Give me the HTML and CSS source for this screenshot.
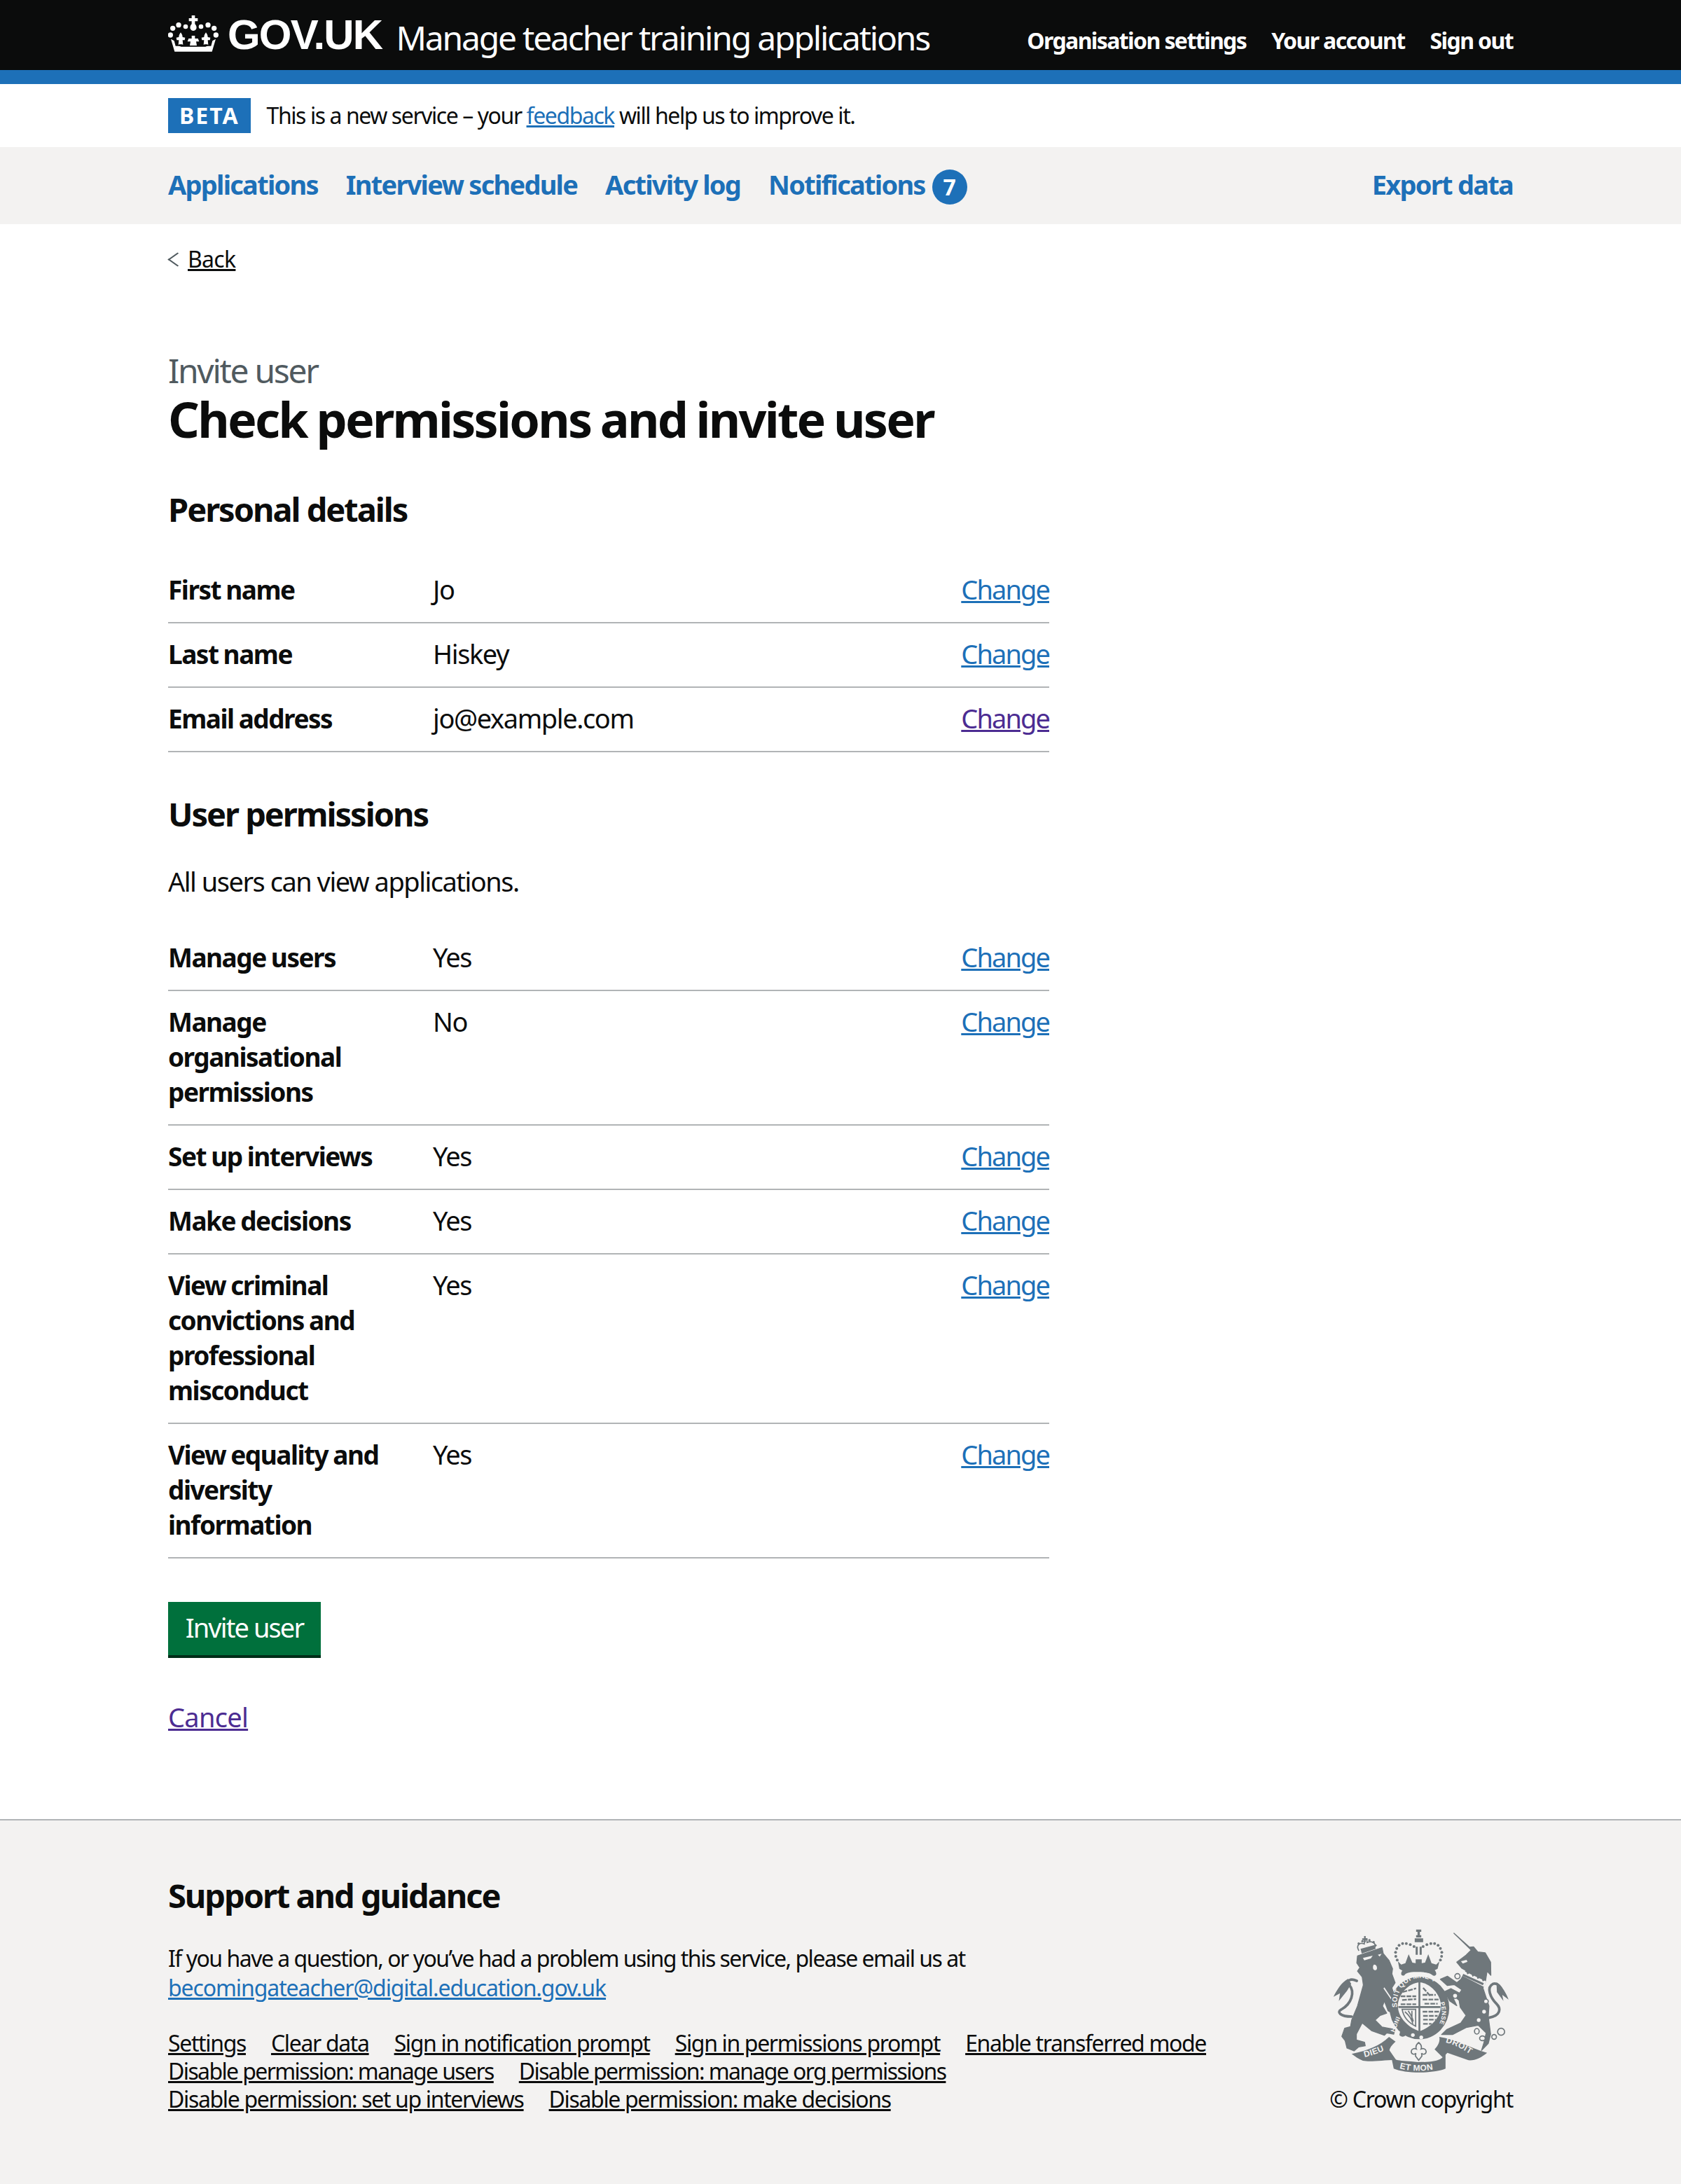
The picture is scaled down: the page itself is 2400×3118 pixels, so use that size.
FILE: index.html
```html
<!DOCTYPE html>
<html lang="en">
<head>
<meta charset="utf-8">
<title>Check permissions and invite user</title>
<link rel="stylesheet" href="styles.css">
</head>
<body>
<header class="header">
  <div class="container header-inner">
    <a class="logo" href="#">
      <svg class="crown" viewBox="45 35 216 156" aria-hidden="true">
        <g fill="#fff">
          <path d="M146 35h14v12h12v13h-12v12c6 6 8 14 6 20-3 6-8 9-13 9s-10-3-13-9c-2-6 0-14 6-20V60h-12V47h12z"/>
          <circle cx="90" cy="76" r="11"/><circle cx="120" cy="83" r="10"/><circle cx="186" cy="83" r="10"/><circle cx="216" cy="76" r="11"/>
          <circle cx="65" cy="90" r="11"/><circle cx="242" cy="90" r="11"/><circle cx="55" cy="119" r="11"/><circle cx="250" cy="119" r="11"/>
          <path d="M146 122h14v12h13l5 13h-13l3 17h-30l3-17h-13l5-13h13z"/>
          <path d="M99 108c5 8 8 12 8 20l11 2-2 11h-9l2 20c-4-2-7-2-10-2-3 0-6 0-10 2l2-20h-9l-2-11 11-2c0-8 3-12 8-20z"/>
          <path d="M207 108c5 8 8 12 8 20l11 2-2 11h-9l2 20c-4-2-7-2-10-2-3 0-6 0-10 2l2-20h-9l-2-11 11-2c0-8 3-12 8-20z"/>
          <path d="M57 136l14 8 6 22c12 0 18-1 24 3h104c6-4 12-3 24-3l6-22 14-8c-5 18-11 36-16 54H73c-5-18-11-36-16-54z"/>
        </g>
      </svg>
      <span class="logo-text">GOV.UK</span>
    </a>
    <a class="service-name" href="#">Manage teacher training applications</a>
    <nav class="account-nav">
      <a href="#">Organisation settings</a>
      <a href="#">Your account</a>
      <a href="#">Sign out</a>
    </nav>
  </div>
</header>

<div class="container beta">
  <strong class="tag">BETA</strong>
  <span>This is a new service – your <a class="link" href="#">feedback</a> will help us to improve it.</span>
</div>

<nav class="primary-nav">
  <div class="container primary-inner">
    <a href="#">Applications</a>
    <a href="#">Interview schedule</a>
    <a href="#">Activity log</a>
    <a href="#">Notifications<span class="count">7</span></a>
    <a class="nav-end" href="#">Export data</a>
  </div>
</nav>

<div class="container">
  <a class="back" href="#">Back</a>
  <main class="main">
    <span class="caption">Invite user</span>
    <h1 class="title">Check permissions and invite user</h1>

    <h2 class="heading first">Personal details</h2>
    <dl class="summary">
      <div class="row"><dt>First name</dt><dd>Jo</dd><dd class="act"><a class="link" href="#">Change</a></dd></div>
      <div class="row"><dt>Last name</dt><dd>Hiskey</dd><dd class="act"><a class="link" href="#">Change</a></dd></div>
      <div class="row"><dt>Email address</dt><dd>jo@example.com</dd><dd class="act"><a class="link visited" href="#">Change</a></dd></div>
    </dl>

    <h2 class="heading second">User permissions</h2>
    <p class="body">All users can view applications.</p>
    <dl class="summary">
      <div class="row"><dt>Manage users</dt><dd>Yes</dd><dd class="act"><a class="link" href="#">Change</a></dd></div>
      <div class="row"><dt>Manage organisational permissions</dt><dd>No</dd><dd class="act"><a class="link" href="#">Change</a></dd></div>
      <div class="row"><dt>Set up interviews</dt><dd>Yes</dd><dd class="act"><a class="link" href="#">Change</a></dd></div>
      <div class="row"><dt>Make decisions</dt><dd>Yes</dd><dd class="act"><a class="link" href="#">Change</a></dd></div>
      <div class="row"><dt>View criminal convictions and professional misconduct</dt><dd>Yes</dd><dd class="act"><a class="link" href="#">Change</a></dd></div>
      <div class="row"><dt>View equality and diversity information</dt><dd>Yes</dd><dd class="act"><a class="link" href="#">Change</a></dd></div>
    </dl>

    <button class="button" type="button">Invite user</button>
    <p class="cancel"><a class="link visited" href="#">Cancel</a></p>
  </main>
</div>

<footer class="footer">
  <div class="container footer-inner">
    <div class="footer-main">
      <h2 class="heading footer-title">Support and guidance</h2>
      <p class="footer-text">If you have a question, or you’ve had a problem using this service, please email us at<br><a class="link footer-email" href="#">becomingateacher@digital.education.gov.uk</a></p>
      <ul class="footer-links">
        <li><a href="#">Settings</a></li>
        <li><a href="#">Clear data</a></li>
        <li><a href="#">Sign in notification prompt</a></li>
        <li><a href="#">Sign in permissions prompt</a></li>
        <li><a href="#">Enable transferred mode</a></li>
        <li class="tight"><a href="#">Disable permission: manage users</a></li>
        <li class="tight"><a href="#">Disable permission: manage org permissions</a></li>
        <li><a href="#">Disable permission: set up interviews</a></li>
        <li><a href="#">Disable permission: make decisions</a></li>
      </ul>
    </div>
    <div class="copyright">
      <svg class="arms" viewBox="70 70 755 615" aria-hidden="true">
        <defs>
          <path id="garter-top" d="M345 405A100 106 0 0 1 548 372"/>
          <path id="garter-right" d="M528 385A100 106 0 0 1 497 512"/>
          <path id="rib-left" d="M190 622Q255 610 340 568"/>
          <path id="rib-mid" d="M345 664Q432 690 530 664"/>
          <path id="rib-right" d="M552 556Q610 570 680 622"/>
        </defs>
        <g class="arm-fill">
          <!-- lion -->
          <path class="arm-edge" d="M175 185L280 150L285 175L310 205L325 240L322 262L336 300L322 322L346 396L346 420L326 432L306 420L290 378L282 400L300 430L272 440L250 460L280 490L335 500L330 520L300 515L290 525L235 505L195 472L170 520L170 545L205 555L208 570L180 575L160 592L130 580L122 548L108 530L120 495L145 488L150 460L175 400L200 310L195 275L175 250L185 235L172 215Z"/>
          <path class="arm-light" d="M198 194l42-10-8 12-28 8zM262 180l16-4-8 12zM246 222c8 0 14 8 12 18-2 8-12 8-16 0-2-8 0-16 4-18zM290 320l52 78-4 2-52-76z"/>
          <path class="arm-line" d="M150 445C100 445 85 425 105 415C150 390 165 340 140 310C125 290 145 280 172 292"/>
          <path d="M135 283C105 298 85 335 72 360L100 345L95 378L130 335L148 305Z"/>
          <path class="arm-thin" d="M181 163C166 138 186 126 204 134L206 112H214L216 128C236 118 258 132 248 150L196 166"/>
          <path d="M188 155l58-16 7 16-60 20z"/>
          <path d="M203 100h7v10h8v7h-8v10h-7v-10h-8v-7h8z"/>
          <circle cx="180" cy="132" r="5"/><circle cx="196" cy="122" r="5"/><circle cx="226" cy="118" r="5"/><circle cx="244" cy="126" r="5"/><circle cx="252" cy="140" r="5"/>
          <!-- centre crown -->
          <path d="M426 72h22v10h-6v14h6v10h-22v-10h6V82h-6zM420 110h36v16h-36zM424 146h9v34h-9zM441 146h9v34h-9z"/>
          <g>
            <circle cx="338" cy="170" r="6"/><circle cx="339" cy="187" r="6"/><circle cx="343" cy="153" r="6"/><circle cx="353" cy="140" r="6"/><circle cx="368" cy="132" r="6"/><circle cx="384" cy="132" r="6"/><circle cx="401" cy="137" r="6"/><circle cx="417" cy="145" r="6"/>
            <circle cx="536" cy="170" r="6"/><circle cx="535" cy="187" r="6"/><circle cx="530" cy="153" r="6"/><circle cx="520" cy="140" r="6"/><circle cx="505" cy="132" r="6"/><circle cx="489" cy="132" r="6"/><circle cx="472" cy="137" r="6"/><circle cx="456" cy="145" r="6"/>
            <circle cx="345" cy="203" r="6"/><circle cx="530" cy="203" r="6"/>
          </g>
          <path d="M348 208l14 14 18-6 14-38 16 36 14 2v-16h26v16l14-2 14-36 14 38 20 6 14-14-8 32-20 10H370l-16-10z"/>
          <path d="M362 262c0-14 14-24 32-26h88c18 2 32 14 30 28-4 8-14 8-18 2-10-8-26-12-68-12-30 0-46 6-50 14-8 4-14 0-14-6z"/>
          <!-- garter and shield -->
          <ellipse cx="440" cy="408" rx="128" ry="134"/>
          <path d="M348 396c2-46 44-94 92-98 48 4 90 52 92 98 2 46-36 92-92 112-56-20-94-66-92-112z" class="arm-light"/>
          <path d="M436 298h8v210h-8zM350 400h180v8H350z"/>
          <g class="arm-dash">
            <path d="M368 340l58-16M360 358h66M366 374l60-4M360 392h66"/>
            <path d="M456 322l30 34M454 352h56M454 372h68M462 390h56"/>
            <path d="M454 424h70M456 442h62M456 458h54M456 476h36"/>
          </g>
          <path class="arm-thin" d="M366 414h58v72c-30-14-52-40-58-72z"/>
          <path class="arm-thin" d="M378 424c14 12 30 32 34 52M392 420c10 14 18 28 22 46M408 420v40"/>
          <text class="arm-text g-top"><textPath href="#garter-top">SOIT QUI MAL Y</textPath></text>
          <text class="arm-text g-side"><textPath href="#garter-right">PENSE</textPath></text>
          <text class="arm-text g-side" transform="rotate(-68 345 470)" x="300" y="475">HONI</text>
          <path d="M360 500c8-8 18-8 22 0l-2 26c-8 8-20 6-26-2z"/>
          <circle class="arm-light" cx="412" cy="524" r="8"/><circle class="arm-light" cx="448" cy="534" r="8"/>
          <!-- unicorn -->
          <path class="arm-edge" d="M588 88L655 148L672 146L690 168L722 172L745 212L746 268L730 250L722 300L712 322L728 370L738 400L735 445L745 520L735 560L706 590L716 558L726 515L692 482L640 492L582 522L535 522L558 500L618 472L640 440L615 405L610 375L575 345L600 398L570 378L548 338L575 325L612 345L622 330L590 308L560 312L530 285L560 272L600 300L618 285L640 248L622 238L600 212L640 182L662 160Z"/>
          <path class="arm-light" d="M626 248l100 46-8 24-98-50z"/>
          <path d="M628 262l88 40-4 9-88-41zM640 248l5 16 7-3-5-15zM662 258l5 16 7-3-5-15zM684 268l5 16 7-3-5-15zM706 278l5 16 7-3-5-15z"/>
          <path class="arm-light" d="M618 208l24-6 4 8-20 8z"/>
          <circle class="arm-ring" cx="603" cy="272" r="11"/>
          <circle class="arm-ring" cx="593" cy="356" r="11"/>
          <circle class="arm-ring" cx="725" cy="380" r="10"/>
          <circle class="arm-light" cx="717" cy="424" r="8"/><circle class="arm-light" cx="694" cy="460" r="8"/>
          <ellipse class="arm-ring" cx="686" cy="508" rx="10" ry="12"/><ellipse class="arm-ring" cx="710" cy="538" rx="12" ry="10"/><ellipse class="arm-ring" cx="760" cy="532" rx="10" ry="10"/><circle class="arm-ring" cx="790" cy="510" r="15"/>
          <path class="arm-line" d="M738 450C790 440 790 410 770 390C745 365 725 320 755 305C775 298 790 320 795 335"/>
          <path d="M770 298C795 315 812 345 822 372L795 352L800 378L772 340Z"/>
          <!-- motto -->
          <path d="M150 605C220 590 270 570 310 532L338 552C322 566 312 580 312 590L340 630C280 632 230 640 198 634C180 628 165 616 150 605Z"/>
          <path d="M316 600C330 640 350 630 434 640C520 640 540 630 552 598L552 668C500 690 380 690 330 668Z"/>
          <path d="M505 585C520 570 530 550 525 532C590 540 660 580 730 600C705 620 680 634 650 632L560 600L540 620Z"/>
          <path class="arm-light" d="M437 556c-10 8-14 18-10 28-8-4-20-2-22 10 0 12 14 16 20 8l-2 12 14 18 14-18-2-12c6 8 20 4 20-8-2-12-14-14-22-10 4-10 0-20-10-28z"/>
          <path class="arm-thin" d="M437 556c-10 8-14 18-10 28-8-4-20-2-22 10 0 12 14 16 20 8l-2 12 14 18 14-18-2-12c6 8 20 4 20-8-2-12-14-14-22-10 4-10 0-20-10-28z"/>
          <text class="arm-text rib"><textPath href="#rib-left" startOffset="16">DIEU</textPath></text>
          <text class="arm-text rib"><textPath href="#rib-mid" startOffset="10">ET MON</textPath></text>
          <text class="arm-text rib"><textPath href="#rib-right">DROIT</textPath></text>
        </g>
      </svg>
      <span class="copy-text">© Crown copyright</span>
    </div>
  </div>
</footer>
</body>
</html>
```
FILE: styles.css
```css
* { box-sizing: border-box; }
html, body { margin: 0; padding: 0; }
body {
  font-family: "Noto Sans", "Open Sans", sans-serif;
  font-size: 38px;
  line-height: 50px;
  color: #0b0c0c;
  background: #fff;
  letter-spacing: -1.4px;
}
a { color: inherit; }
.container { width: 1920px; margin: 0 auto; }

.header { background: #0b0c0c; height: 120px; border-bottom: 20px solid #1d70b8; color: #fff; }
.header-inner { display: flex; align-items: flex-start; height: 100px; }
.logo { display: flex; align-items: flex-start; text-decoration: none; margin-top: 24px; margin-right: 20px; }
.crown { width: 72px; height: 52px; display: block; margin-top: -2px; margin-right: 13px; }
.logo-text { font-family: "Liberation Sans", Arial, sans-serif; font-weight: 700; font-size: 60px; line-height: 52px; letter-spacing: -1.8px; }
.service-name { font-size: 48px; line-height: 54px; margin-top: 27px; text-decoration: none; white-space: nowrap; letter-spacing: -2.2px; }
.account-nav { margin-left: auto; display: flex; gap: 36px; margin-top: 38px; font-size: 32px; line-height: 40px; font-weight: 700; letter-spacing: -1.6px; }
.account-nav a { text-decoration: none; }

.beta { display: flex; align-items: center; height: 90px; font-size: 32px; line-height: 40px; letter-spacing: -1.43px; }
.tag { background: #1d70b8; color: #fff; font-size: 32px; line-height: 50px; height: 50px; padding: 0 16px; margin-right: 23px; letter-spacing: 2px; }
.link { color: #1d70b8; }
.visited { color: #4c2c92; }

.primary-nav { background: #f3f2f1; height: 110px; }
.primary-inner { display: flex; align-items: flex-start; gap: 40px; height: 110px; padding-top: 28px; font-weight: 700; letter-spacing: -1.75px; }
.primary-inner a { text-decoration: none; display: flex; align-items: flex-start; color: #1d70b8; }
.count { display: block; width: 50px; height: 50px; margin-top: 4px; margin-left: 10px; border-radius: 50%; background: #1d70b8; color: #fff; font-size: 32px; line-height: 50px; text-align: center; letter-spacing: 0; }
.nav-end { margin-left: auto; }

.back { display: inline-block; margin-top: 30px; font-size: 32px; line-height: 40px; padding-left: 28px; position: relative; color: #0b0c0c; letter-spacing: -0.7px; }
.back::before { content: ""; position: absolute; left: 5px; top: 12px; width: 15px; height: 15px; border-left: 2px solid #505a5f; border-bottom: 2px solid #505a5f; transform: rotate(45deg) skew(-10deg, -10deg); }

.main { width: 1258px; padding-top: 114px; }
.caption { display: block; font-size: 48px; line-height: 46px; color: #505a5f; letter-spacing: -2.3px; }
.title { font-size: 70px; line-height: 76px; font-weight: 700; margin: 8px 0 0; letter-spacing: -2.75px; word-spacing: -2px; }
.heading { font-size: 47px; line-height: 50px; font-weight: 700; margin: 0; letter-spacing: -2.05px; }
.first { margin-top: 66px; margin-bottom: 46px; }
.second { margin-top: 63px; }
.body { margin: 46px 0 0; height: 50px; letter-spacing: -1.5px; }
.summary { margin: 40px 0 0; }
.first + .summary { margin-top: 0; }
.row { display: grid; grid-template-columns: 378px 1fr auto; border-bottom: 2px solid #b1b4b6; padding: 18px 0 22px; }
.row dt { font-weight: 700; font-size: 37px; margin: 1px 0 -1px; padding-right: 40px; letter-spacing: -1.5px; word-spacing: -1px; }
.row dd { margin: 0; }
.act { letter-spacing: -1.9px; }

.button { display: block; margin-top: 62px; width: 218px; height: 80px; padding: 0 0 4px; background: #00703c; color: #fff; border: 0; border-bottom: 4px solid #002d18; font: inherit; letter-spacing: -1.9px; }
.cancel { margin: 59px 0 0; padding-bottom: 121px; letter-spacing: -0.7px; }

.footer { background: #f3f2f1; border-top: 2px solid #b1b4b6; height: 522px; font-size: 32px; line-height: 40px; letter-spacing: -1.5px; }
.footer-inner { display: flex; justify-content: space-between; align-items: flex-start; }
.footer-main { width: 1540px; }
.footer-title { margin-top: 82px; }
.footer-text { margin: 44px 0 0; line-height: 42px; }
.footer-email { letter-spacing: -1.1px; }
.footer-links { list-style: none; margin: 38px 0 0; padding: 0; display: flex; flex-wrap: wrap; column-gap: 36px; letter-spacing: -1.35px; }
.footer-links .tight { letter-spacing: -1.62px; }
.footer-links a { color: #0b0c0c; }
.copyright { display: flex; flex-direction: column; align-items: flex-end; margin-top: 155px; letter-spacing: -1.2px; }
.arms { width: 252px; height: 205px; display: block; margin-right: 5px; }
.copy-text { margin-top: 18px; white-space: nowrap; }

.arm-fill { fill: #6f777b; }
.arm-edge { stroke: #6f777b; stroke-width: 4; stroke-linejoin: round; }
.arm-light { fill: #f3f2f1; }
.arm-line { fill: none; stroke: #6f777b; stroke-width: 11; stroke-linecap: round; }
.arm-thin { fill: none; stroke: #6f777b; stroke-width: 5; }
.arm-ring { fill: #f3f2f1; stroke: #6f777b; stroke-width: 5; }
.arm-dash { fill: none; stroke: #6f777b; stroke-width: 7; stroke-dasharray: 20 5; }
.arm-text { font-family: "Liberation Sans", Arial, sans-serif; font-weight: 700; fill: #f3f2f1; letter-spacing: 1px; }
.g-top { font-size: 30px; }
.g-side { font-size: 26px; }
.rib { font-size: 36px; }
```
